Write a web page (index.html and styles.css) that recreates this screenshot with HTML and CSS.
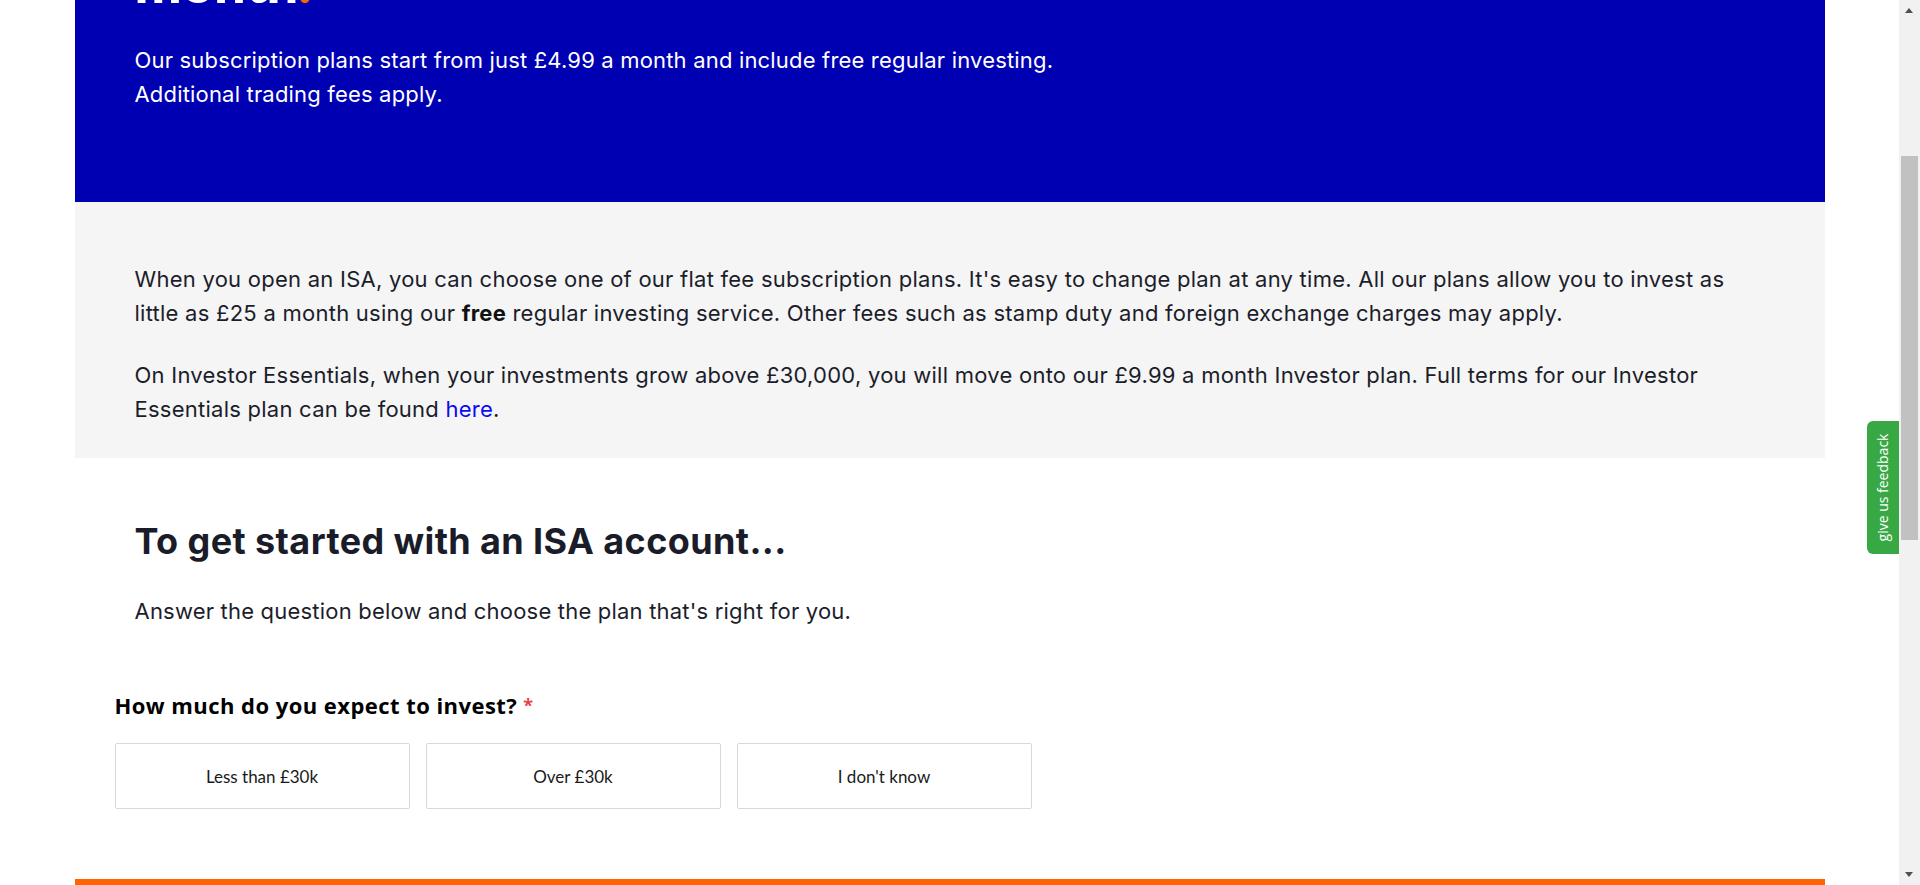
FILE: index.html
```html
<!DOCTYPE html>
<html lang="en">
<head>
<meta charset="utf-8">
<title>ISA plans</title>
<link rel="stylesheet" href="styles.css">
</head>
<body>
<div class="viewport">
  <div class="page">
    <main class="container">
      <section class="hero">
        <h1 class="hero-title">month<span class="dot">.</span></h1>
        <p class="hero-text">Our subscription plans start from just £4.99 a month and include free regular investing.<br>Additional trading fees apply.</p>
      </section>
      <section class="info">
        <p>When you open an ISA, you can choose one of our flat fee subscription plans. It's easy to change plan at any time. All our plans allow you to invest as little as £25 a month using our <strong>free</strong> regular investing service. Other fees such as stamp duty and foreign exchange charges may apply.</p>
        <p>On Investor Essentials, when your investments grow above £30,000, you will move onto our £9.99 a month Investor plan. Full terms for our Investor Essentials plan can be found <a href="#" class="link">here</a>.</p>
      </section>
      <section class="start">
        <h2 class="start-title">To get started with an ISA account...</h2>
        <p class="start-text">Answer the question below and choose the plan that's right for you.</p>
        <div class="question">
          <div class="question-label">How much do you expect to invest?<span class="req">*</span></div>
          <div class="options">
            <button class="option" type="button">Less than £30k</button>
            <button class="option" type="button">Over £30k</button>
            <button class="option" type="button">I don't know</button>
          </div>
        </div>
      </section>
      <div class="orange-bar"></div>
    </main>
    <a href="#" class="feedback"><span class="feedback-text">give us feedback</span></a>
  </div>
  <div class="scrollbar">
    <div class="arrow arrow-up"></div>
    <div class="track"><div class="thumb"></div></div>
    <div class="arrow arrow-down"></div>
  </div>
</div>
</body>
</html>
```
FILE: styles.css
```css
html, body {
  margin: 0;
  padding: 0;
  height: 885px;
  overflow: hidden;
  background: #ffffff;
}
body {
  font-family: Inter, "Liberation Sans", sans-serif;
  color: #1c1d2b;
}
.viewport {
  display: flex;
  height: 885px;
}
.page {
  flex: 1;
  position: relative;
  overflow: hidden;
}
.container {
  width: 1750px;
  margin: 0 auto;
  display: flex;
  flex-direction: column;
}
.hero {
  background: #0000b3;
  color: #ffffff;
  padding: 0 60px 91px;
  height: 202px;
  box-sizing: border-box;
}
.hero-title {
  margin: -50px 0 0;
  font-family: Lato, sans-serif;
  font-size: 56px;
  line-height: 64px;
  font-weight: 900;
}
.dot { color: #ff6400; }
.hero-text {
  margin: 29px 0 0;
  font-size: 22px;
  line-height: 34px;
  letter-spacing: 0.18px;
}
.info {
  background: #f4f5f4;
  padding: 60px 60px 31px;
  height: 256px;
  box-sizing: border-box;
}
.info p {
  margin: 0 0 28px;
  font-size: 22px;
  line-height: 34px;
  letter-spacing: 0.25px;
}
.info p:last-child { margin-bottom: 0; }
.info strong { font-weight: 700; color: #111; }
.link { color: #0b0bf0; text-decoration: none; }
.start {
  padding: 63px 60px 0;
  height: 421px;
  box-sizing: border-box;
}
.start-title {
  margin: 0;
  font-size: 36px;
  line-height: 40px;
  font-weight: 700;
  letter-spacing: 0.4px;
  color: #1a1d29;
}
.start-text {
  margin: 33px 0 0;
  font-size: 22px;
  line-height: 34px;
  letter-spacing: 0.2px;
}
.question {
  margin: 63px 0 0 -20px;
}
.question-label {
  font-family: "Open Sans", "Liberation Sans", sans-serif;
  font-weight: 700;
  font-size: 22px;
  line-height: 28px;
  color: #000;
  letter-spacing: 0.45px;
}
.req {
  color: #e8414a;
  margin-left: 6px;
  font-size: 18px;
  vertical-align: 2px;
}
.options {
  display: flex;
  gap: 16px;
  margin-top: 24px;
}
.option {
  width: 295px;
  height: 66px;
  background: #fff;
  border: 1px solid #d9d9d9;
  border-radius: 2px;
  font-family: Lato, "Liberation Sans", sans-serif;
  font-size: 17px;
  color: #1a1a1a;
  padding: 0;
}
.orange-bar {
  height: 6px;
  background: #ff6400;
}
.feedback {
  position: absolute;
  right: 0;
  top: 421px;
  width: 32px;
  height: 133px;
  background: #38a844;
  border-radius: 6px 0 0 6px;
  display: flex;
  align-items: center;
  justify-content: center;
  text-decoration: none;
}
.feedback-text {
  display: block;
  transform: rotate(-90deg);
  white-space: nowrap;
  color: #fff;
  font-family: "Open Sans", sans-serif;
  font-size: 14px;
}
.scrollbar {
  width: 21px;
  background: #f1f1f1;
  display: flex;
  flex-direction: column;
}
.arrow {
  height: 21px;
  position: relative;
}
.arrow::after {
  content: "";
  position: absolute;
  left: 6px;
  border-left: 4.5px solid transparent;
  border-right: 4.5px solid transparent;
}
.arrow-up::after {
  top: 8px;
  border-bottom: 5px solid #505050;
}
.arrow-down::after {
  top: 8px;
  border-top: 5px solid #505050;
}
.track {
  flex: 1;
  padding: 0 2px;
}
.thumb {
  margin-top: 135px;
  height: 384px;
  background: #c1c1c1;
}
```
